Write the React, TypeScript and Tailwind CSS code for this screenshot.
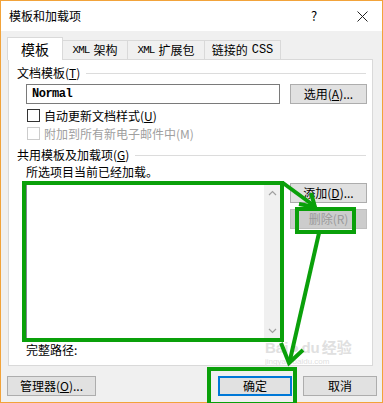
import { ReactNode } from 'react';

const cjk = "font-['Noto_Sans_CJK_SC','Noto_Sans',sans-serif]";

function GroupLabel({ children }: { children: ReactNode }) {
  return (
    <div className="flex items-center h-[14px] pl-[8px] pr-[6px] gap-[6px]">
      <span className="text-[12px] leading-none whitespace-nowrap">{children}</span>
      <div className="flex-1 h-px bg-[#dcdcdc]" />
    </div>
  );
}

function Btn({ children, w, disabled, def }: { children: ReactNode; w: string; disabled?: boolean; def?: boolean }) {
  return (
    <div
      className={`${w} h-[20px] flex items-center justify-center text-[12px] leading-none ${
        disabled
          ? 'bg-[#cccccc] border border-[#bfbfbf] text-[#9a9a9a]'
          : def
          ? 'bg-[#e1e1e1] border-2 border-[#0078d7] text-black'
          : 'bg-[#e1e1e1] border border-[#adadad] text-black'
      }`}
    >
      {children}
    </div>
  );
}

export default function App() {
  return (
    <div className={`relative w-[383px] h-[403px] border border-[#f2a33a] bg-[#f0f0f0] flex flex-col ${cjk} text-black`}>
      {/* title bar */}
      <div className="h-[30px] bg-white flex items-center pl-[8px] text-[12px]">
        <span className="flex-1">模板和加载项</span>
        <span className="w-[10px] text-[13px] mr-[36px]">?</span>
        <svg width="11" height="11" viewBox="0 0 11 11" className="mr-[14px]">
          <path d="M0.5 0.5L10.5 10.5M10.5 0.5L0.5 10.5" stroke="#222" strokeWidth="1" />
        </svg>
      </div>

      {/* tabs */}
      <div className="h-[28px] flex items-end pl-[6px] relative z-10">
        <div className="w-[56px] h-[23px] bg-white border border-b-0 border-[#d9d9d9] flex items-center justify-center text-[14px] -mb-px">
          模板
        </div>
        <div className="w-[65px] h-[19px] bg-[#f0f0f0] border border-l-0 border-b-0 border-[#d9d9d9] flex items-center justify-center text-[12px] leading-none">
          <span className="font-['Liberation_Mono',monospace] text-[11px] tracking-[-1px] mr-[4px]">XML</span>架构
        </div>
        <div className="w-[77px] h-[19px] bg-[#f0f0f0] border border-l-0 border-b-0 border-[#d9d9d9] flex items-center justify-center text-[12px] leading-none">
          <span className="font-['Liberation_Mono',monospace] text-[11px] tracking-[-1px] mr-[4px]">XML</span>扩展包
        </div>
        <div className="w-[76px] h-[19px] bg-[#f0f0f0] border border-l-0 border-b-0 border-[#d9d9d9] flex items-center justify-center text-[12px] leading-none">
          链接的<span className="ml-[4px] font-['Liberation_Mono',monospace] text-[12px]">CSS</span>
        </div>
      </div>

      {/* panel */}
      <div className="ml-[7px] w-[365px] h-[307px] bg-white border border-[#d9d9d9] flex flex-col pt-[6px]">
        <GroupLabel>
          文档模板(<u>T</u>)
        </GroupLabel>

        <div className="mt-[4px] flex items-center pl-[17px] gap-[10px]">
          <div className="w-[254px] h-[20px] border border-[#7a7a7a] flex items-center pl-[5px] font-['Liberation_Mono',monospace] text-[12px] font-semibold tracking-[-0.5px]">
            Normal
          </div>
          <Btn w="w-[77px]">
            选用(<u>A</u>)...
          </Btn>
        </div>

        <div className="mt-[4px] h-[15px] flex items-center pl-[18px] gap-[4px] text-[12px]">
          <div className="w-[13px] h-[13px] border border-[#333]" />
          <span>
            自动更新文档样式(<u>U</u>)
          </span>
        </div>

        <div className="mt-[3px] h-[15px] flex items-center pl-[18px] gap-[4px] text-[12px] text-[#a0a0a0]">
          <div className="w-[13px] h-[13px] border border-[#cccccc]" />
          <span>附加到所有新电子邮件中(M)</span>
        </div>

        <div className="mt-[7px]">
          <GroupLabel>
            共用模板及加载项(<u>G</u>)
          </GroupLabel>
        </div>

        <div className="mt-[3px] h-[14px] pl-[17px] text-[12px] leading-[14px]">所选项目当前已经加载。</div>

        <div className="mt-[4px] flex items-start pl-[17px] gap-[8px]">
          <div className="w-[256px] h-[158px] border border-[#828790] flex justify-end">
            <div className="w-[17px] h-full bg-[#f0f0f0] flex flex-col items-center justify-between py-[6px]">
              <svg width="9" height="6" viewBox="0 0 9 6">
                <path d="M1 5L4.5 1.5L8 5" stroke="#a0a0a0" strokeWidth="1.2" fill="none" />
              </svg>
              <svg width="9" height="6" viewBox="0 0 9 6">
                <path d="M1 1L4.5 4.5L8 1" stroke="#a0a0a0" strokeWidth="1.2" fill="none" />
              </svg>
            </div>
          </div>
          <div className="flex flex-col gap-[6px]">
            <Btn w="w-[77px]">
              添加(<u>D</u>)...
            </Btn>
            <Btn w="w-[77px]" disabled>
              删除(R)
            </Btn>
          </div>
        </div>

        <div className="mt-[2px] h-[14px] pl-[17px] text-[12px] leading-[14px]">完整路径:</div>
      </div>

      {/* bottom buttons */}
      <div className="mt-[10px] flex items-center pl-[6px] pr-[5px]">
        <Btn w="w-[89px]">
          管理器(<u>O</u>)...
        </Btn>
        <div className="flex-1" />
        <Btn w="w-[74px]" def>
          确定
        </Btn>
        <div className="w-[11px]" />
        <Btn w="w-[74px]">取消</Btn>
      </div>

      {/* watermark */}
      <div className="absolute left-[264px] top-[338px] flex flex-col items-start text-[#e0e0e0] pointer-events-none">
        <span className="font-['Liberation_Sans',sans-serif] font-bold text-[15px] leading-none">
          Bai<span className="mx-[2px]">&#x25CF;</span>du<span className={`${cjk} ml-[2px]`}>经验</span>
        </span>
        <span className="font-['Liberation_Sans',sans-serif] text-[8px] leading-none mt-[3px]">jingyan.baidu.com</span>
      </div>

      {/* green annotations */}
      <svg className="absolute -left-px -top-px pointer-events-none" width="383" height="403" viewBox="0 0 383 403">
        <g stroke="#0aa00a" fill="none" strokeWidth="4">
          <rect x="24" y="183" width="258" height="157" />
          <rect x="297" y="209" width="57" height="23" />
          <rect x="209" y="369" width="86" height="35" />
          <path d="M283 183L313 205" />
          <path d="M299 204L315 207L311 193" strokeLinejoin="miter" />
          <path d="M319 233L290 360" />
          <path d="M281 343L289 363L303 350" strokeLinejoin="miter" />
        </g>
      </svg>
    </div>
  );
}
